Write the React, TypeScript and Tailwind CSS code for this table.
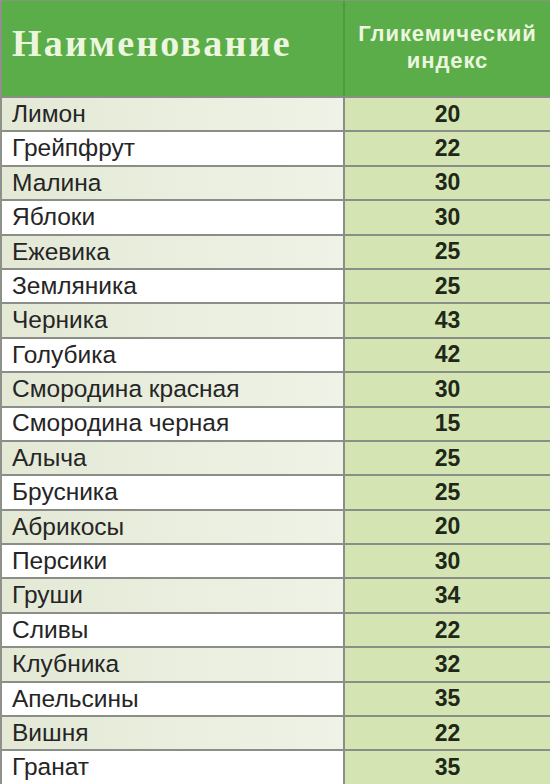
const rows: [string, number][] = [
  ["Лимон", 20],
  ["Грейпфрут", 22],
  ["Малина", 30],
  ["Яблоки", 30],
  ["Ежевика", 25],
  ["Земляника", 25],
  ["Черника", 43],
  ["Голубика", 42],
  ["Смородина красная", 30],
  ["Смородина черная", 15],
  ["Алыча", 25],
  ["Брусника", 25],
  ["Абрикосы", 20],
  ["Персики", 30],
  ["Груши", 34],
  ["Сливы", 22],
  ["Клубника", 32],
  ["Апельсины", 35],
  ["Вишня", 22],
  ["Гранат", 35],
];

export default function App() {
  return (
    <div className="w-[550px] h-[784px] overflow-hidden bg-white border-l-2 border-[#8d918a]">
      <div className="flex h-[96px] bg-[#5aad48] border-t border-[#7f9a74]">
        <div className="w-[343px] border-r-2 border-[#4e9a3d] flex items-center pl-[10px] pb-[12px]">
          <span
            className="text-[38px] font-bold tracking-[2.2px] text-[#ecf6de] leading-none"
            style={{ fontFamily: '"Liberation Serif", serif' }}
          >
            Наименование
          </span>
        </div>
        <div className="flex-1 flex flex-col items-center justify-center pb-[4px]">
          <span
            className="text-[22px] font-bold tracking-[0.9px] text-[#ecf6de] leading-[27px] text-center"
            style={{ fontFamily: '"Liberation Sans", sans-serif' }}
          >
            Гликемический
            <br />
            индекс
          </span>
        </div>
      </div>
      {rows.map(([name, gi], i) => (
        <div key={name} className="flex h-[34.4px] border-t-2 border-[#8a8e86]">
          <div
            className={
              "w-[343px] border-r-2 border-[#8a8e86] flex items-center pl-[10px] " +
              (i % 2 === 0
                ? "bg-gradient-to-r from-[#e3e9d5] to-[#eff3e7]"
                : "bg-white")
            }
          >
            <span
              className="text-[24.5px] text-[#252525] leading-none"
              style={{ fontFamily: '"Liberation Sans", sans-serif' }}
            >
              {name}
            </span>
          </div>
          <div className="flex-1 bg-[#d4e5b3] flex items-center justify-center">
            <span
              className="text-[23px] font-bold text-[#1f2818] leading-none"
              style={{ fontFamily: '"Liberation Sans", sans-serif' }}
            >
              {gi}
            </span>
          </div>
        </div>
      ))}
    </div>
  );
}
